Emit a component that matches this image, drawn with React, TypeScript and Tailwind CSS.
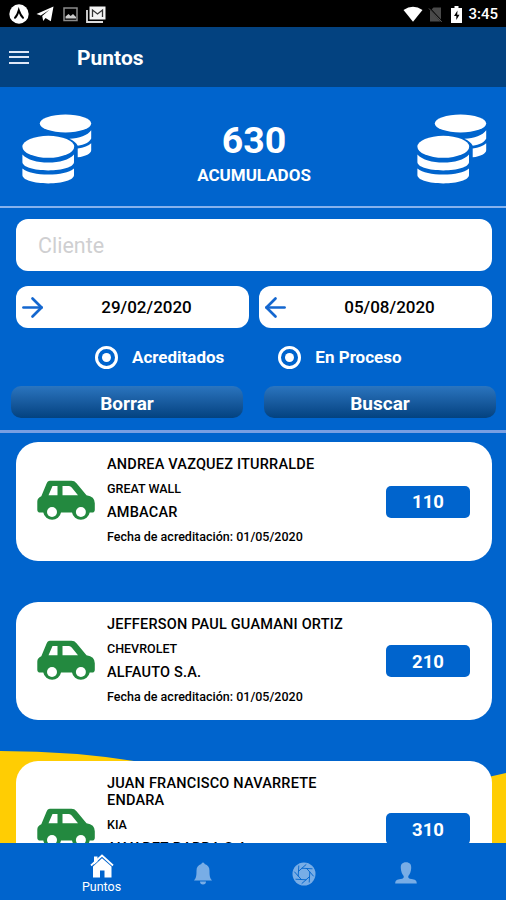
import { ArrowLeft, ArrowRight } from "lucide-react";

type Credit = {
  client: string;
  brand: string;
  dealer: string;
  date: string;
  points: number;
};

const credits: Credit[] = [
  { client: "ANDREA VAZQUEZ ITURRALDE", brand: "GREAT WALL", dealer: "AMBACAR", date: "01/05/2020", points: 110 },
  { client: "JEFFERSON PAUL GUAMANI ORTIZ", brand: "CHEVROLET", dealer: "ALFAUTO S.A.", date: "01/05/2020", points: 210 },
  { client: "JUAN FRANCISCO NAVARRETE ENDARA", brand: "KIA", dealer: "ALVAREZ BARBA S.A.", date: "01/05/2020", points: 310 },
];

function CoinsIcon() {
  return (
    <svg viewBox="0 0 70 70" className="mt-[5px] h-[70px] w-[70px]" fill="#fff">
      <ellipse cx="43.5" cy="9.5" rx="25.7" ry="9" />
      <path d="M69.2 16.3v8.2c-1.5 3.7-6.8 6.3-13.4 7.2-1.7-3-4.7-5.3-8.4-6.9 9.8-.4 18.3-3.3 21.8-8.5Z" />
      <path d="M69.2 29.3v6.9c0 3.3-5.6 6.1-13.5 7.1v-8.8c6.1-.8 11-2.7 13.5-5.2Z" />
      <ellipse cx="26.3" cy="32.8" rx="25.9" ry="11" />
      <path d="M.4 40.6c5.2 5.5 14.5 8 25.9 8s20.7-2.5 25.7-8v7.5c0 5-11.5 8.3-25.7 8.3S.4 53.1.4 48.1Z" />
      <path d="M.4 54.5c5.2 4.2 14.5 6.1 25.9 6.1s20.7-1.9 25.7-6.1v6.6c0 5-11.5 8.3-25.7 8.3S.4 66.1.4 61.1Z" />
    </svg>
  );
}

function CarIcon() {
  return (
    <svg viewBox="0 0 58 42" className="mt-px h-[42px] w-[58px] shrink-0">
      <path
        fill="#23893f"
        fillRule="evenodd"
        d="M13 .8H34.5q3 0 5 2.4L49.5 15.3q8.3 1.2 8.3 8v6.4q0 2.8-2.8 2.8h-2.3a9 9 0 0 1-17.7 0H24a9 9 0 0 1-17.7 0H3.2Q.3 32.5.3 29.7V21.5q0-3.5 4-5.2L9.5 3.8q1-3 3.5-3Zm2.5 5.2L11.5 15.3H20.500V6Zm10 0v9.3h15.5L34.700 7.5Q33.5 6 32 6Z"
      />
      <circle cx="15" cy="32" r="5" fill="#fff" />
      <circle cx="43.9" cy="32" r="5" fill="#fff" />
    </svg>
  );
}

function StatusBar() {
  return (
    <div className="flex h-[27px] shrink-0 items-center justify-between bg-black pt-px pr-2 pl-[9px]">
      <div className="flex items-center">
        <svg viewBox="0 0 20 20" className="h-5 w-5">
          <circle cx="10" cy="10" r="9.7" fill="#fff" />
          <path d="M6 13.8q2.3-2 3.8-7.5 2 5.5 4.2 7.5" fill="none" stroke="#000" strokeWidth="2" strokeLinecap="round" />
        </svg>
        <svg viewBox="0 0 18 16" className="ml-[7px] h-4 w-[18px]" fill="#fff">
          <path d="M.5 8 17.5.5 14.8 15.3 9.5 12 7.2 15 6.2 10 13.5 3.8 4.8 9.5Z" />
        </svg>
        <svg viewBox="0 0 15 15" className="ml-[9px] h-[15px] w-[15px]">
          <path d="M1 1h13v12.5H1Z" fill="none" stroke="#8b8b8b" strokeWidth="1.5" />
          <path d="M2.500 11.5V9.5L5.500 7l2.2 2L10 7l3 3v1.5Z" fill="#ccc" />
        </svg>
        <svg viewBox="0 0 21 17" className="ml-2 h-[17px] w-[21px]">
          <path d="M1 4v12h16" fill="none" stroke="#ddd" strokeWidth="1.8" />
          <path d="M3.5.5h16v13h-16Z" fill="#f4f4f4" />
          <path d="M6.5 11V4l5 4 5-4v7" fill="none" stroke="#333" strokeWidth="1.3" />
        </svg>
      </div>
      <div className="flex items-center">
        <svg viewBox="0 0 20 16" className="h-4 w-5" fill="#fff">
          <path d="M.5 4Q10-2.500 19.5 4L10 15.8Z" />
        </svg>
        <svg viewBox="0 0 15 17" className="ml-[5px] h-[17px] w-[15px]">
          <path d="M5.500 1.5H13v14H2V5Z" fill="#4a4a4a" />
          <path d="m.8 1.5 13 14" stroke="#000" strokeWidth="1.8" />
          <path d="m1 2.5 12.8 13.3" stroke="#5b5b5b" strokeWidth="1" />
        </svg>
        <svg viewBox="0 0 11 17" className="ml-2 h-[17px] w-[11px]">
          <path d="M3.500 0h4v2H11v15H0V2h3.500Z" fill="#fff" />
          <path d="M6.500 4.500 3 10h2.300v4L8.500 8.700H6.200Z" fill="#000" />
        </svg>
        <span className="ml-[6px] pt-px text-[15px] leading-none font-medium">3:45</span>
      </div>
    </div>
  );
}

function Header() {
  return (
    <header className="flex h-[60px] shrink-0 items-center bg-[#034280] pl-[9px]">
      <button aria-label="Menú" className="flex h-[13px] w-5 flex-col justify-between">
        <span className="h-[2px] w-5 bg-[#dfe8f8]" />
        <span className="h-[2px] w-5 bg-[#dfe8f8]" />
        <span className="h-[2px] w-5 bg-[#dfe8f8]" />
      </button>
      <h1 className="ml-12 pt-[3px] text-[21px] font-bold">Puntos</h1>
    </header>
  );
}

function Summary() {
  return (
    <section className="flex h-[121px] shrink-0 items-center justify-between border-b-2 border-[#86b2ed] pr-[19px] pl-[22px]">
      <CoinsIcon />
      <div className="mt-3 pr-px text-center">
        <div className="pt-px text-[37.5px] leading-10 font-bold">630</div>
        <div className="mt-[3px] text-[17px] leading-6 font-bold">ACUMULADOS</div>
      </div>
      <CoinsIcon />
    </section>
  );
}

function DateField({ value, direction }: { value: string; direction: "from" | "to" }) {
  const Arrow = direction === "from" ? ArrowRight : ArrowLeft;
  return (
    <div className="flex h-[42px] flex-1 items-center rounded-xl bg-white pl-[3px] text-black">
      <Arrow size={31} strokeWidth={2.1} className="-mr-1 -ml-[2px] shrink-0 text-[#1467cf]" />
      <span className="flex-1 pt-px pr-[6px] pl-1.5 text-center text-[17px] font-medium">{value}</span>
    </div>
  );
}

function RadioOption({ label }: { label: string }) {
  return (
    <label className="flex items-center gap-[14px] text-[17px] font-bold">
      <span className="flex h-[23px] w-[23px] items-center justify-center rounded-full border-[3px] border-white">
        <span className="h-[9px] w-[9px] rounded-full bg-white" />
      </span>
      <span className="pt-0.5">{label}</span>
    </label>
  );
}

function ActionButton({ label }: { label: string }) {
  return (
    <button className="h-8 flex-1 rounded-[10px] bg-linear-to-b from-[#2b75bf] to-[#034280] pt-[2px] text-[19px] leading-none font-bold">
      {label}
    </button>
  );
}

function Filters() {
  return (
    <section className="h-[225px] shrink-0 border-b-[3px] border-[#799fe2]">
      <div className="px-4 pt-[11px]">
        <input
          placeholder="Cliente"
          className="block h-[52px] w-[476px] rounded-xl bg-white px-[22px] text-[21.5px] text-black outline-none placeholder:text-[#cfcfd1]"
        />
        <div className="mt-[15px] flex w-[476px] gap-[10px]">
          <DateField value="29/02/2020" direction="from" />
          <DateField value="05/08/2020" direction="to" />
        </div>
      </div>
      <div className="mt-[17px] flex h-6 items-center gap-[54px] pl-[95px]">
        <RadioOption label="Acreditados" />
        <RadioOption label="En Proceso" />
      </div>
      <div className="mt-[17px] flex gap-[21px] pr-[10px] pl-[11px]">
        <ActionButton label="Borrar" />
        <ActionButton label="Buscar" />
      </div>
    </section>
  );
}

function CreditCard({ credit }: { credit: Credit }) {
  return (
    <article className="flex w-[476px] shrink-0 items-center rounded-[22px] bg-white pt-[14px] pr-[22px] pb-[15.5px] pl-[21px] text-black">
      <CarIcon />
      <div className="ml-3 w-[250px] font-medium">
        <div className="text-[14.5px] leading-[17px] tracking-[0.2px]">{credit.client}</div>
        <div className="mt-2 text-[12.5px] leading-4">{credit.brand}</div>
        <div className="mt-2 text-[14.5px] leading-4 tracking-[0.2px]">{credit.dealer}</div>
        <div className="mt-2 text-[12.5px] leading-4 whitespace-nowrap">Fecha de acreditación: {credit.date}</div>
      </div>
      <div className="mt-[2px] ml-auto flex h-8 w-[84px] items-center justify-center rounded-[5px] bg-[#0064cd] pt-[3px] text-[18.5px] font-bold text-white">
        {credit.points}
      </div>
    </article>
  );
}

function BottomNav() {
  return (
    <nav className="relative grid h-[57px] shrink-0 grid-cols-[51px_101px_101px_101px_101px] bg-[#0064cd]">
      <span />
      <div className="flex flex-col items-center pt-[11px]">
        <svg viewBox="0 0 24 24" className="h-6 w-6" fill="#fff">
          <path d="M1 11.5 12 1.5 23 11.5" fill="none" stroke="#fff" strokeWidth="1.8" />
          <path d="M4 2.5h3.500v5L4 10.500Z" />
          <path d="M12 4.300 21.500 12.500v11H14.500v-7H10v7H3v-11Z" />
        </svg>
        <span className="mt-px text-[12.5px] leading-4">Puntos</span>
      </div>
      <div className="flex justify-center pt-[19px]">
        <svg viewBox="0 0 18 23" className="h-[23px] w-[18px]" fill="#78ade6">
          <path d="M7.4 2a1.6 1.6 0 0 1 3.2 0c3.3.8 4.9 3.3 4.9 6.8 0 5.500.4 7.200 2.500 9.700H0c2.100-2.500 2.500-4.200 2.500-9.700 0-3.500 1.600-6 4.900-6.800ZM6 19.600h6a3 3 0 0 1-6 0Z" />
        </svg>
      </div>
      <div className="flex justify-center pt-[19px]">
        <svg viewBox="0 0 24 24" className="h-6 w-6">
          <circle cx="12" cy="12" r="11.5" fill="#78ade6" />
          <g fill="none" stroke="#0064cd" strokeWidth="0.9">
            {[0, 45, 90, 135, 180, 225, 270, 315].map((angle) => (
              <path key={angle} d="M9.7 6.2 20.500 6.800" transform={`rotate(${angle} 12 12)`} />
            ))}
          </g>
        </svg>
      </div>
      <div className="flex justify-center pt-[19px] pl-[2px]">
        <svg viewBox="0 0 22 22" className="h-[22px] w-[22px]" fill="#78ade6">
          <path d="M11 .3c3.700 0 5.500 2.200 5.200 5.700-.2 3.500-1.300 6.500-2.900 8-.3 2 .3 2.600 3.200 3.100 3.500.6 5.300 1.400 5.300 4.400H.2c0-3 1.800-3.800 5.300-4.400 2.900-.5 3.500-1.100 3.200-3.100C7.100 12.500 6 9.500 5.800 6 5.500 2.500 7.300.3 11 .3Z" />
        </svg>
      </div>
    </nav>
  );
}

export default function App() {
  return (
    <div className="flex h-[900px] w-[506px] flex-col overflow-hidden bg-[#0064cd] font-[Roboto,sans-serif] text-white">
      <StatusBar />
      <Header />
      <Summary />
      <Filters />
      <main className="relative min-h-0 flex-1 overflow-hidden">
        <svg viewBox="0 0 506 100" className="absolute bottom-0 left-0 h-[100px] w-[506px]" fill="#ffcd03">
          <path d="M0 8Q75 8 141 19Q320 75 506 30V100H0Z" />
        </svg>
        <div className="relative flex flex-col gap-[41px] px-4 pt-[9px]">
          {credits.map((credit) => (
            <CreditCard key={credit.client} credit={credit} />
          ))}
        </div>
      </main>
      <BottomNav />
    </div>
  );
}
